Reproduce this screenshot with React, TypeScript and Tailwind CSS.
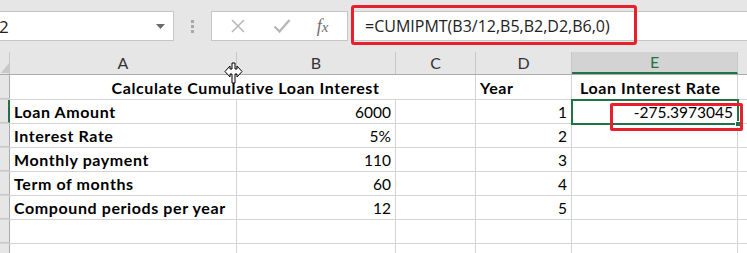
import React from "react";

const cellFont = { fontFamily: "Lato, 'Liberation Sans', sans-serif" };

function Cell({
  w,
  children,
  align = "left",
  bold = false,
  noRight = false,
  className = "",
}: {
  w: string;
  children?: React.ReactNode;
  align?: "left" | "right" | "center";
  bold?: boolean;
  noRight?: boolean;
  className?: string;
}) {
  return (
    <div
      className={`${w} shrink-0 h-full flex items-end pb-[2px] px-[4px] overflow-visible whitespace-nowrap leading-[18px] text-black ${
        noRight ? "" : "border-r border-[#d4d4d4]"
      } ${bold ? "font-bold text-[16px] tracking-[0.6px]" : "text-[15.5px]"} ${
        align === "right" ? "justify-end" : align === "center" ? "justify-center" : "justify-start"
      } ${className}`}
    >
      {children}
    </div>
  );
}

function RowHead({ active = false }: { active?: boolean }) {
  return (
    <div
      className={`w-[10px] shrink-0 h-full bg-[#e6e6e6] border-b border-[#c8c8c8] ${
        active ? "border-r-2 border-r-[#217346]" : "border-r border-r-[#ababab]"
      }`}
    />
  );
}

type RowData = [string, string, string, string];

const rows: RowData[] = [
  ["Loan Amount", "6000", "1", "-275.3973045"],
  ["Interest Rate", "5%", "2", ""],
  ["Monthly payment", "110", "3", ""],
  ["Term of months", "60", "4", ""],
  ["Compound periods per year", "12", "5", ""],
  ["", "", "", ""],
  ["", "", "", ""],
];

export default function App() {
  return (
    <div className="relative w-[747px] h-[253px] overflow-hidden bg-[#e6e6e6]" style={cellFont}>
      {/* Toolbar */}
      <div className="h-[52px] pt-[11px] flex items-start">
        {/* Name box */}
        <div className="w-[174px] h-[30px] bg-white border border-[#c6c6c6] border-l-0 flex items-center justify-between pr-[8px]">
          <span
            className="text-[17px] leading-none text-[#222] -ml-[1px]"
            style={{ fontFamily: "'Open Sans', 'Noto Sans', sans-serif" }}
          >
            2
          </span>
          <svg width="9" height="5" viewBox="0 0 9 5">
            <path d="M0 0 H9 L4.5 5 Z" fill="#6b6b6b" />
          </svg>
        </div>
        {/* dots */}
        <div className="w-[37px] h-[30px] flex flex-col items-center justify-center gap-[2px]">
          <div className="w-[3px] h-[3px] bg-[#a8a8a8]" />
          <div className="w-[3px] h-[3px] bg-[#a8a8a8]" />
          <div className="w-[3px] h-[3px] bg-[#a8a8a8]" />
        </div>
        {/* fx box */}
        <div className="w-[137px] h-[30px] bg-white border border-[#c6c6c6] flex items-center">
          <div className="w-[48px] flex justify-center pl-[4px]">
            <svg width="16" height="16" viewBox="0 0 16 16">
              <path d="M2 2 L14 14 M14 2 L2 14" stroke="#b8b8b8" strokeWidth="1.6" fill="none" />
            </svg>
          </div>
          <div className="w-[44px] flex justify-center">
            <svg width="18" height="16" viewBox="0 0 18 16">
              <path d="M1.5 8.5 L6.5 13.5 L16.5 2" stroke="#b8b8b8" strokeWidth="2.4" fill="none" />
            </svg>
          </div>
          <div className="flex-1 flex justify-center pr-[6px]">
            <span
              className="text-[18px] italic leading-none text-[#6f6f6f]"
              style={{ fontFamily: "'Liberation Serif', 'DejaVu Serif', serif" }}
            >
              f<span className="text-[15px]">x</span>
            </span>
          </div>
        </div>
        {/* formula input */}
        <div className="ml-[4px] flex-1 h-[30px] bg-white border-y border-[#c6c6c6] flex items-center pl-[13px]">
          <span
            className="text-[16px] leading-none text-[#222]"
            style={{ fontFamily: "'Open Sans', 'Noto Sans', sans-serif" }}
          >
            =CUMIPMT(B3/12,B5,B2,D2,B6,0)
          </span>
        </div>
      </div>

      {/* Column headers */}
      <div className="h-[23px] flex border-b border-[#ababab] text-[16px] text-[#333]">
        <div className="w-[10px] shrink-0 h-full border-r border-[#c8c8c8] flex items-end justify-end">
          <svg width="8" height="10" viewBox="0 0 8 10" className="mb-[1px]">
            <path d="M8 0 V10 H0 Z" fill="#c8c8c8" />
          </svg>
        </div>
        <div className="w-[227px] shrink-0 border-r border-[#c8c8c8] flex items-center justify-center">A</div>
        <div className="w-[159px] shrink-0 border-r border-[#c8c8c8] flex items-center justify-center">B</div>
        <div className="w-[80px] shrink-0 border-r border-[#c8c8c8] flex items-center justify-center">C</div>
        <div className="w-[96px] shrink-0 border-r border-[#c8c8c8] flex items-center justify-center">D</div>
        <div className="w-[166px] shrink-0 bg-[#d3d3d3] border-r border-[#c8c8c8] border-b-2 border-b-[#217346] text-[#217346] flex items-center justify-center">
          E
        </div>
        <div className="flex-1" />
      </div>

      {/* Grid */}
      <div className="bg-white">
        {/* Row 1 */}
        <div className="h-[25px] flex border-b border-[#d4d4d4]">
          <RowHead />
          <Cell w="w-[466px]" align="center" bold className="pl-[10px]">
            Calculate Cumulative Loan Interest
          </Cell>
          <Cell w="w-[96px]" bold>
            Year
          </Cell>
          <Cell w="w-[166px]" bold className="pl-[8px]">
            Loan Interest Rate
          </Cell>
          <div className="flex-1" />
        </div>
        {rows.map((r, i) => (
          <div key={i} className="h-[24px] flex border-b border-[#d4d4d4]">
            <RowHead active={i === 0} />
            <Cell w="w-[227px]" bold>
              {r[0]}
            </Cell>
            <Cell w="w-[159px]" align="right">
              {r[1]}
            </Cell>
            <Cell w="w-[80px]" />
            <Cell w="w-[96px]" align="right">
              {r[2]}
            </Cell>
            <Cell w="w-[166px]" align="right">
              {r[3]}
            </Cell>
            <div className="flex-1" />
          </div>
        ))}
      </div>

      {/* Selected cell E2 */}
      <div className="absolute left-[571px] top-[99px] w-[168px] h-[26px] border-2 border-[#217346]">
        <div className="absolute -right-[4px] -bottom-[4px] w-[6px] h-[6px] bg-[#217346] border border-white" />
      </div>

      {/* Red highlight boxes */}
      <div className="absolute left-[351px] top-[5px] w-[286px] h-[40px] border-[3px] border-[#e8202e] rounded-[3px]" />
      <div className="absolute left-[610px] top-[103px] w-[133px] h-[28px] border-[3px] border-[#e8202e] rounded-[2px]" />

      {/* Resize cursor */}
      <svg className="absolute left-[224px] top-[62px]" width="19" height="22" viewBox="0 0 19 22">
        <path
          d="M8 1 H11 V7 H13 V4 L18 9.5 L13 15 V12 H11 V21 H8 V12 H6 V15 L1 9.5 L6 4 V7 H8 Z"
          fill="white"
          stroke="black"
          strokeWidth="1"
        />
      </svg>
    </div>
  );
}
